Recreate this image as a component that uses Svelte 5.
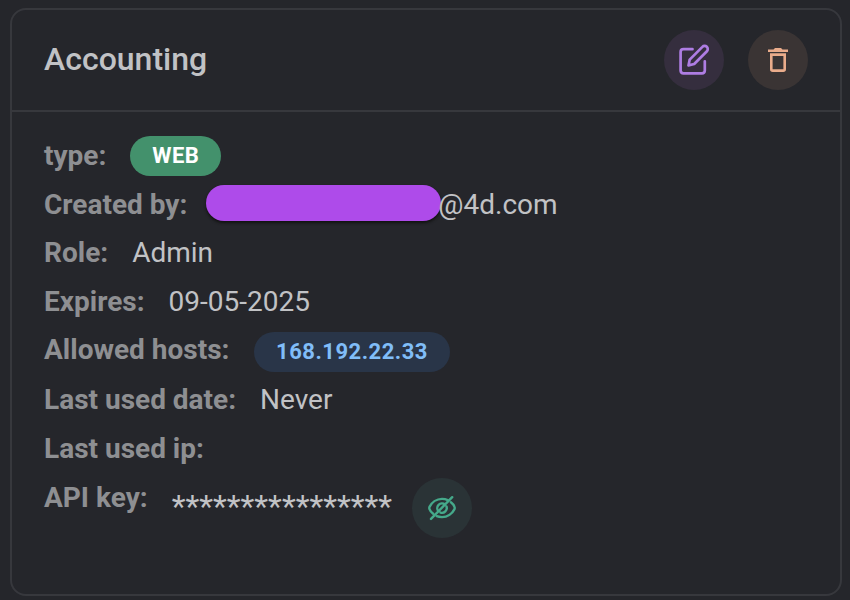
<script>
  const email = '@4d.com';
  const key = '*'.repeat(16);
</script>

<main>
  <section class="card">
    <header>
      <h1>Accounting</h1>
      <div class="actions">
        <button class="round edit" aria-label="Edit">
          <svg width="32" height="32" viewBox="0 0 32 32" fill="none" stroke="currentColor" stroke-width="2.7" stroke-linecap="round" stroke-linejoin="round">
            <path d="M14.5 5.2H5.5Q2.6 5.2 2.6 8V26.6Q2.6 29.4 5.5 29.4H24Q26.8 29.4 26.8 26.6V17.3" />
            <path d="M10.5 21.4L11.7 15.6L24.4 2.9A3 3 0 0 1 28.9 7.2L16.2 20L10.5 21.4Z" />
          </svg>
        </button>
        <button class="round trash" aria-label="Delete">
          <svg width="20" height="24" viewBox="0 0 20 24">
            <path fill="currentColor" fill-rule="evenodd" d="M0 1.4H5.5L7 0H13L14.5 1.4H20V4H0ZM2 5.3H18V21.3Q18 24 15.3 24H4.7Q2 24 2 21.3ZM4.6 8V21.3H15.4V8Z" />
          </svg>
        </button>
      </div>
    </header>
    <div class="details">
      <div class="row type"><b>type:</b><span class="chip web">WEB</span></div>
      <div class="row creator"><b>Created by:</b><span class="redacted"></span><span class="email">{email}</span></div>
      <div class="row role"><b>Role:</b><span>Admin</span></div>
      <div class="row"><b>Expires:</b><span>09-05-2025</span></div>
      <div class="row hosts"><b>Allowed hosts:</b><span class="chip host">168.192.22.33</span></div>
      <div class="row"><b>Last used date:</b><span>Never</span></div>
      <div class="row"><b>Last used ip:</b></div>
      <div class="row key">
        <b>API key:</b><span class="mask">{key}</span>
        <button class="round reveal" aria-label="Show API key">
          <svg width="28" height="26" viewBox="0 0 28 26" fill="none" stroke="currentColor" stroke-width="2.4" stroke-linecap="round" stroke-linejoin="round">
            <path d="M5.2 18.8C3.2 17.3 2 15.5 1.5 14.1Q1.1 13 1.5 11.9C3.7 7.5 8.5 3.9 14 3.9C16.2 3.9 18 4.3 19.7 5.1M22.9 7.3C24.8 8.7 26.1 10.5 26.5 11.9Q26.9 13 26.5 14.1C24.3 18.5 19.5 22.1 14 22.1C12 22.1 10.2 21.8 8.7 21.2" />
            <path d="M10.4 16.3A4.8 4.8 0 0 1 17 9.4M18.5 11.5A4.8 4.8 0 0 1 12.5 17.6M3 23.9L24.2 2.2" />
          </svg>
        </button>
      </div>
    </div>
  </section>
</main>

<style>
  :global(body) { background: #25262b; }
  main {
    box-sizing: border-box;
    height: 600px;
    padding: 8px 8px 4px 10px;
    overflow: hidden;
    font-family: Roboto, sans-serif;
    color: #c1c2c5;
  }
  .card {
    box-sizing: border-box;
    height: 588px;
    border: 2px solid #37383d;
    border-radius: 16px;
  }
  header {
    box-sizing: border-box;
    height: 102px;
    padding: 0 32px;
    display: flex;
    align-items: center;
    justify-content: space-between;
    border-bottom: 2px solid #37383d;
  }
  h1 { margin: 0 0 2px; font-size: 32px; line-height: 40px; font-weight: 500; }
  .actions { display: flex; gap: 24px; }
  .round {
    width: 60px;
    height: 60px;
    padding: 0;
    border: 0;
    border-radius: 50%;
    display: flex;
    align-items: center;
    justify-content: center;
    flex: none;
  }
  .edit { background: #352e3e; color: #ae7de3; }
  .trash { background: #3a3434; color: #eaac8b; }
  .reveal { background: #2a3336; color: #45a98a; margin-left: 20px; }
  .details { padding: 19px 32px; }
  .row {
    display: flex;
    align-items: center;
    height: 49px;
    font-size: 28px;
    line-height: 36px;
    white-space: nowrap;
  }
  .role { height: 48px; }
  .role b, .role span { margin-bottom: 1px; }
  b { font-weight: 700; color: #8e8f92; margin-right: 24px; }
  .chip {
    box-sizing: border-box;
    height: 40px;
    padding: 0 22px;
    border-radius: 20px;
    font-size: 22px;
    line-height: 40px;
    font-weight: 700;
  }
  .web { background: #43916c; color: #fff; letter-spacing: .4px; }
  .hosts b { margin-bottom: 2px; }
  .host { background: #293548; color: #80bdf8; letter-spacing: .5px; margin: 2px 0 0 .6px; }
  .creator b { margin-right: 19px; }
  .redacted {
    width: 235px;
    height: 36px;
    margin-bottom: 3px;
    border-radius: 18px;
    background: #ae4bea;
    box-shadow: 0 2px 3px #111;
  }
  .email { margin-left: -3px; }
  .mask { margin-top: 16px; font-size: 32px; }
  .key .round { margin-top: 20px; }
</style>
